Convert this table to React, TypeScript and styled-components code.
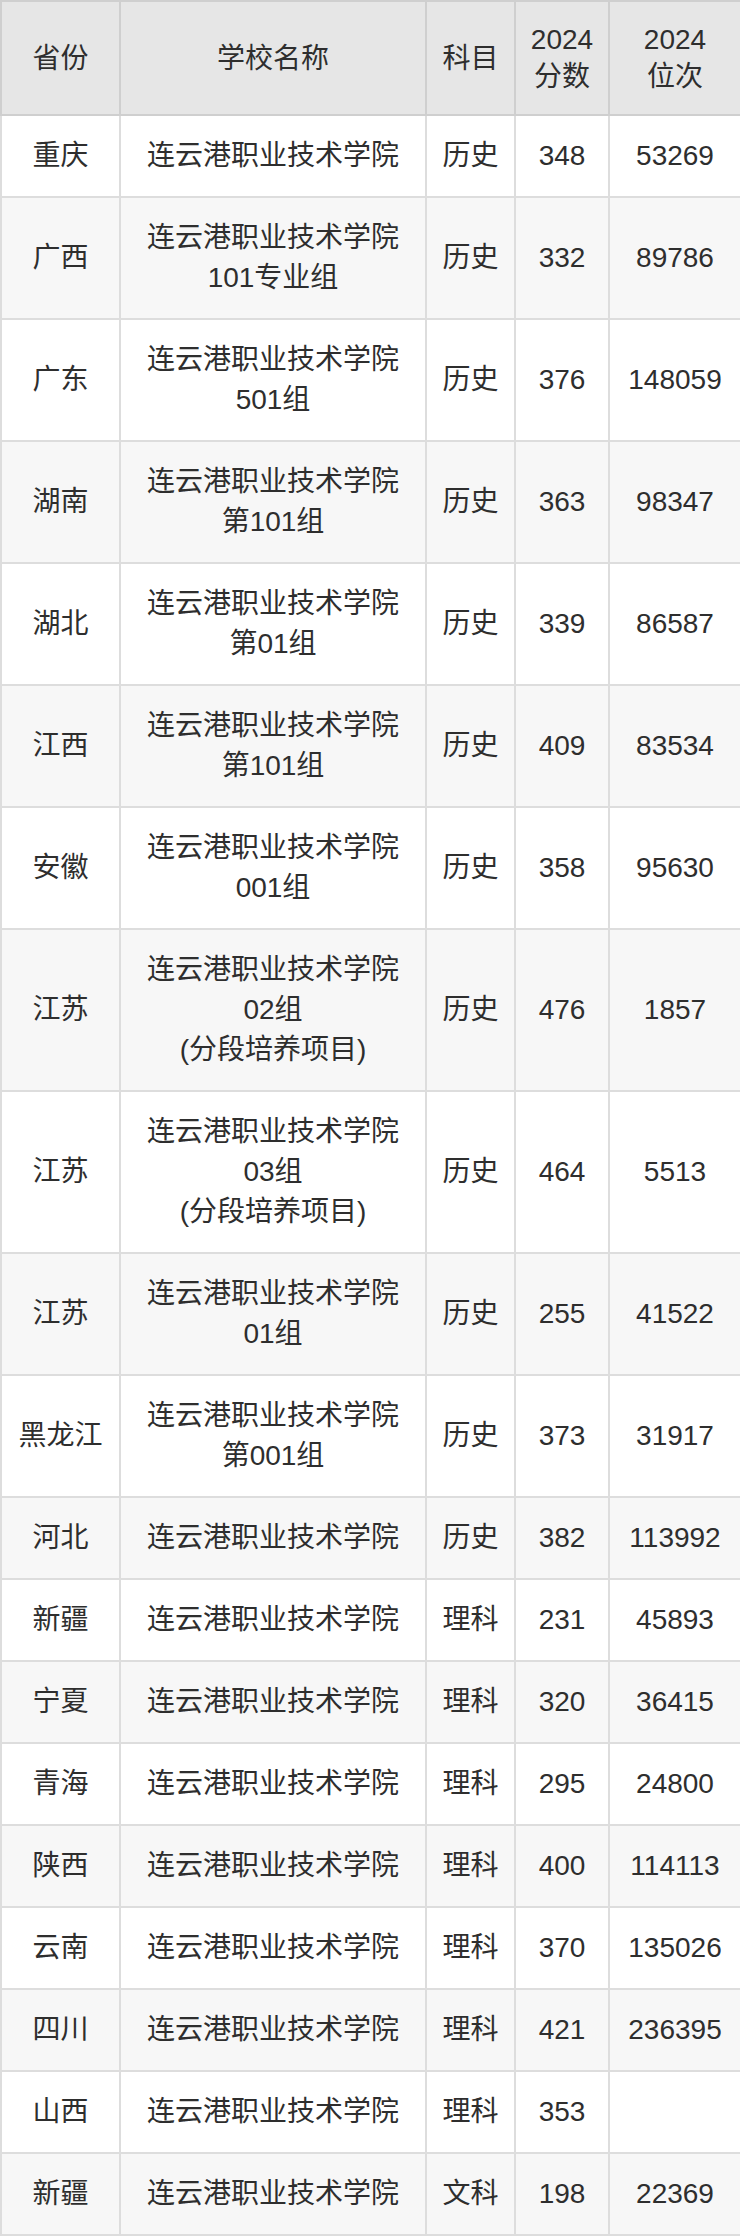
import React from "react";
import styled, { createGlobalStyle } from "styled-components";

const Global = createGlobalStyle`
  html, body { margin: 0; padding: 0; background: #ffffff; }
  body { font-family: "Liberation Sans", "Noto Sans CJK SC", sans-serif; color: #333333; }
`;

const Table = styled.table`
  width: 740px;
  table-layout: fixed;
  border-collapse: collapse;
  border: 2px solid #d9d9d9;
  font-size: 28px;
  text-align: center;
`;

const HeadCell = styled.th`
  background: #e6e6e6;
  border: 2px solid #cfcfcf;
  padding: 19px 4px;
  line-height: 37px;
  font-weight: normal;
  color: #2e2e2e;
`;

const Row = styled.tr<{ $striped: boolean }>`
  background: ${(p) => (p.$striped ? "#f7f7f7" : "#ffffff")};
`;

const Cell = styled.td`
  border: 2px solid #dddddd;
  padding: 20px 4px;
  line-height: 40px;
  color: #2e2e2e;
`;

type Item = [string, string[], string, string, string];

const NAME = "连云港职业技术学院";

const rows: Item[] = [
  ["重庆", [NAME], "历史", "348", "53269"],
  ["广西", [NAME, "101专业组"], "历史", "332", "89786"],
  ["广东", [NAME, "501组"], "历史", "376", "148059"],
  ["湖南", [NAME, "第101组"], "历史", "363", "98347"],
  ["湖北", [NAME, "第01组"], "历史", "339", "86587"],
  ["江西", [NAME, "第101组"], "历史", "409", "83534"],
  ["安徽", [NAME, "001组"], "历史", "358", "95630"],
  ["江苏", [NAME, "02组", "(分段培养项目)"], "历史", "476", "1857"],
  ["江苏", [NAME, "03组", "(分段培养项目)"], "历史", "464", "5513"],
  ["江苏", [NAME, "01组"], "历史", "255", "41522"],
  ["黑龙江", [NAME, "第001组"], "历史", "373", "31917"],
  ["河北", [NAME], "历史", "382", "113992"],
  ["新疆", [NAME], "理科", "231", "45893"],
  ["宁夏", [NAME], "理科", "320", "36415"],
  ["青海", [NAME], "理科", "295", "24800"],
  ["陕西", [NAME], "理科", "400", "114113"],
  ["云南", [NAME], "理科", "370", "135026"],
  ["四川", [NAME], "理科", "421", "236395"],
  ["山西", [NAME], "理科", "353", ""],
  ["新疆", [NAME], "文科", "198", "22369"],
];

export default function App() {
  return (
    <>
      <Global />
      <Table>
        <colgroup>
          <col style={{ width: 119 }} />
          <col style={{ width: 306 }} />
          <col style={{ width: 89 }} />
          <col style={{ width: 94 }} />
          <col style={{ width: 132 }} />
        </colgroup>
        <thead>
          <tr>
            <HeadCell>省份</HeadCell>
            <HeadCell>学校名称</HeadCell>
            <HeadCell>科目</HeadCell>
            <HeadCell>
              2024
              <br />
              分数
            </HeadCell>
            <HeadCell>
              2024
              <br />
              位次
            </HeadCell>
          </tr>
        </thead>
        <tbody>
          {rows.map((r, i) => (
            <Row key={i} $striped={i % 2 === 1}>
              <Cell>{r[0]}</Cell>
              <Cell>
                {r[1].map((line, j) => (
                  <React.Fragment key={j}>
                    {j > 0 && <br />}
                    {line}
                  </React.Fragment>
                ))}
              </Cell>
              <Cell>{r[2]}</Cell>
              <Cell>{r[3]}</Cell>
              <Cell>{r[4]}</Cell>
            </Row>
          ))}
        </tbody>
      </Table>
    </>
  );
}
